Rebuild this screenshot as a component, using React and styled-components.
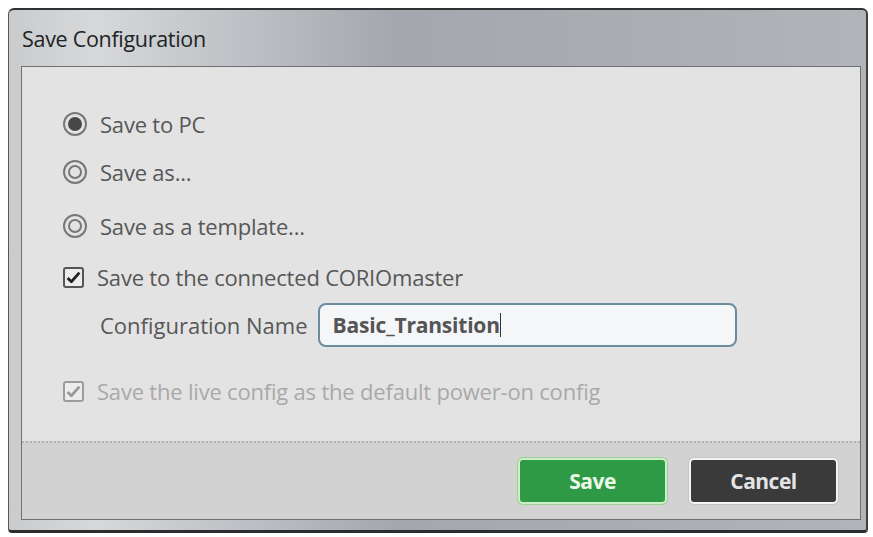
import React from 'react';
import styled, { createGlobalStyle } from 'styled-components';

const GlobalStyle = createGlobalStyle`
  body {
    margin: 0;
    background: #ffffff;
    font-family: "Open Sans", "Noto Sans", sans-serif;
  }
`;

const Window = styled.div`
  margin: 8px 0 0 8px;
  width: 860px;
  height: 525px;
  box-sizing: border-box;
  display: flex;
  flex-direction: column;
  border-top: 2px solid #2f3133;
  border-left: 1px solid #55585b;
  border-right: 2px solid #3d4043;
  border-bottom: 3px solid #2b2d2f;
  border-radius: 6px 6px 4px 4px;
  background: linear-gradient(90deg, #c9cbcd 0%, #d6d8da 10%, #a4a8ae 45%, #a9adb2 70%, #b1b4b8 100%);
  padding: 0 5px 10px 12px;
`;

const TitleBar = styled.div`
  height: 56px;
  display: flex;
  align-items: center;
  padding-left: 1px;
  font-size: 21.5px;
  color: #202326;
  letter-spacing: -0.3px;
`;

const Panel = styled.div`
  flex: 1;
  display: flex;
  flex-direction: column;
  border: 1px solid #6e7174;
  background: #e3e3e3;
`;

const Content = styled.div`
  flex: 1;
  padding: 32px 0 0 41px;
  display: flex;
  flex-direction: column;
`;

const Row = styled.label`
  height: 50px;
  flex-shrink: 0;
  margin-top: ${(p) => p.mt || 0}px;
  display: flex;
  align-items: center;
  font-size: 22px;
  color: ${(p) => (p.disabled ? '#a9a9a9' : '#575757')};
  letter-spacing: -0.2px;
`;

const Radio = styled.span`
  width: 24px;
  height: 24px;
  box-sizing: border-box;
  border-radius: 50%;
  border: 2px solid #777;
  display: flex;
  align-items: center;
  justify-content: center;
  margin-right: 13px;

  &::after {
    content: '';
    width: 14px;
    height: 14px;
    box-sizing: border-box;
    border-radius: 50%;
    background: ${(p) => (p.checked ? '#484848' : 'transparent')};
    border: 2px solid ${(p) => (p.checked ? '#484848' : '#777')};
  }
`;

const Check = styled.span`
  width: 21px;
  height: 21px;
  box-sizing: border-box;
  border-radius: 3px;
  border: 2px solid ${(p) => (p.disabled ? '#9c9c9c' : '#555')};
  background: #ececec;
  display: flex;
  align-items: center;
  justify-content: center;
  margin: 0 13px 0 0;
`;

const NameRow = styled.div`
  height: 46px;
  flex-shrink: 0;
  display: flex;
  align-items: center;
  padding-left: 37px;
  font-size: 22px;
  color: #575757;
  letter-spacing: 0;
`;

const NameInput = styled.div`
  margin-left: 10px;
  width: 419px;
  height: 44px;
  box-sizing: border-box;
  border: 2px solid #6b8ba0;
  border-radius: 8px;
  background: #f4f6f8;
  display: flex;
  align-items: center;
  padding-left: 13px;
  font-size: 21px;
  font-weight: 700;
  letter-spacing: -0.2px;
  color: #555;
`;

const Caret = styled.span`
  width: 1px;
  height: 24px;
  background: #333;
`;

const Footer = styled.div`
  height: 76px;
  border-top: 2px dotted #b3b3b3;
  background: #d2d2d2;
  display: flex;
  align-items: center;
  justify-content: flex-end;
  gap: 22px;
  padding-right: 22px;
`;

const Button = styled.button`
  width: 149px;
  height: 46px;
  border-radius: 5px;
  border: 2px solid ${(p) => (p.primary ? '#cdeec6' : '#f4f4f4')};
  background: ${(p) => (p.primary ? '#2f9a45' : '#3a3a3a')};
  color: ${(p) => (p.primary ? '#e9f7e6' : '#e4e4e4')};
  font-family: "Open Sans", "Noto Sans", sans-serif;
  font-weight: 700;
  font-size: 21px;
  letter-spacing: -0.5px;
  box-shadow: 0 0 0 1px ${(p) => (p.primary ? '#9fcf98' : '#c4c4c4')};
`;

const Tick = ({ color }) => (
  <svg width="15" height="13" viewBox="0 0 14 12">
    <path d="M1.5 6.5 L5 10 L12.5 1.5" fill="none" stroke={color} strokeWidth="2.6" strokeLinejoin="round" />
  </svg>
);

export default function App() {
  return (
    <>
      <GlobalStyle />
      <Window>
        <TitleBar>Save Configuration</TitleBar>
        <Panel>
          <Content>
            <Row>
              <Radio checked />
              Save to PC
            </Row>
            <Row mt={-2}>
              <Radio />
              Save as...
            </Row>
            <Row mt={4}>
              <Radio />
              Save as a template...
            </Row>
            <Row mt={1}>
              <Check>
                <Tick color="#222" />
              </Check>
              Save to the connected CORIOmaster
            </Row>
            <NameRow>
              Configuration Name
              <NameInput>
                Basic_Transition
                <Caret />
              </NameInput>
            </NameRow>
            <Row mt={18} disabled>
              <Check disabled>
                <Tick color="#9a9a9a" />
              </Check>
              Save the live config as the default power-on config
            </Row>
          </Content>
          <Footer>
            <Button primary>Save</Button>
            <Button>Cancel</Button>
          </Footer>
        </Panel>
      </Window>
    </>
  );
}
